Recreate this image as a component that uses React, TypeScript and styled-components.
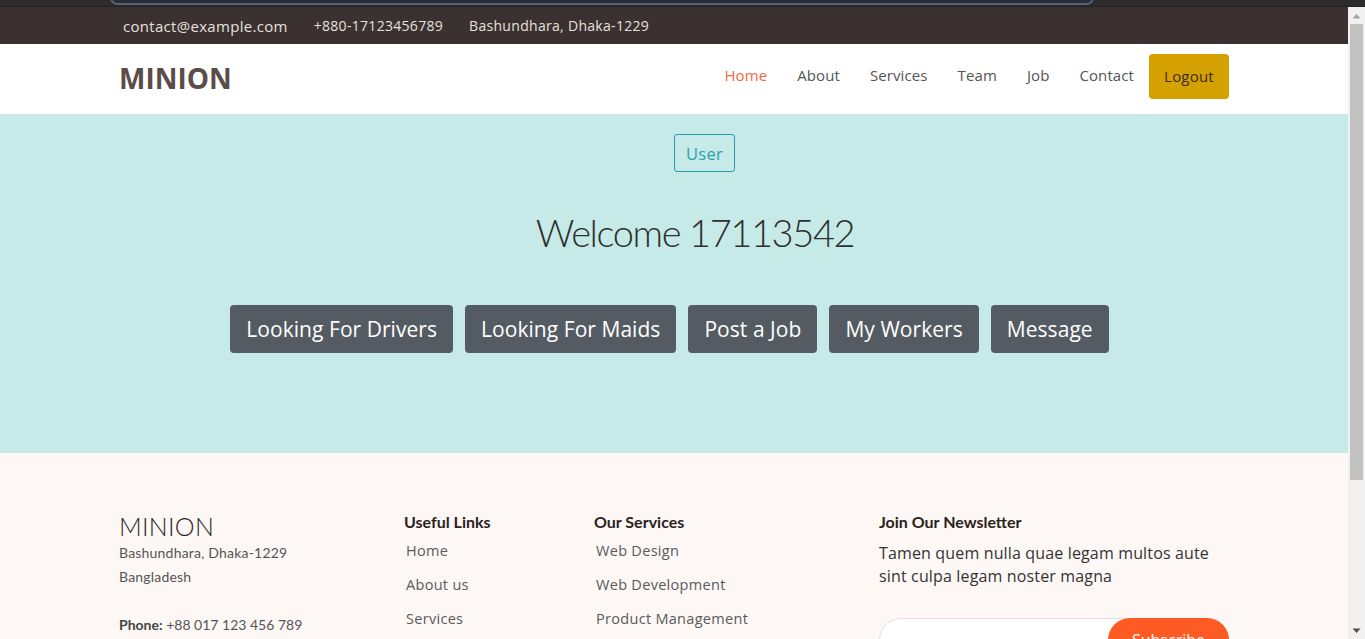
import React from "react";
import styled, { createGlobalStyle } from "styled-components";

const Global = createGlobalStyle`
  html, body { margin: 0; padding: 0; height: 100%; overflow: hidden; }
  body { font-family: "Open Sans", "DejaVu Sans", sans-serif; }
  * { box-sizing: border-box; }
`;

const Frame = styled.div`
  height: 100vh;
  display: flex;
  flex-direction: column;
  background: #2c2a2a;
`;

const ChromeStrip = styled.div`
  height: 7px;
  flex: none;
  background: #2d2b2b;
  border-bottom: 1px solid #222;
  overflow: hidden;
`;

const ChromePill = styled.div`
  margin: -10px 0 0 110px;
  width: 984px;
  height: 15px;
  border: 2px solid #56617a;
  border-radius: 8px;
  background: #2b2e34;
`;

const Viewport = styled.div`
  flex: 1;
  min-height: 0;
  display: flex;
`;

const Page = styled.div`
  flex: 1;
  min-width: 0;
  overflow: hidden;
  background: #fff;
`;

const ScrollBar = styled.div`
  width: 17px;
  flex: none;
  background: #f1f1f1;
  display: flex;
  flex-direction: column;
`;

const ScrollBtn = styled.div`
  height: 17px;
  flex: none;
  display: flex;
  align-items: center;
  justify-content: center;
`;

const ScrollThumb = styled.div`
  height: 456px;
  margin: 0 2px;
  background: #c1c1c1;
`;

const ScrollRest = styled.div`
  flex: 1;
`;

const TopBar = styled.div`
  height: 37px;
  background: #3b3130;
  display: flex;
  align-items: center;
  padding-left: 123px;
  gap: 26px;
  font-family: "Open Sans", sans-serif;
  color: #e6e0de;
`;

const TopItem = styled.span<{ $size: number }>`
  font-size: ${(p) => p.$size}px;
  letter-spacing: 0.3px;
`;

const NavBar = styled.header`
  height: 70px;
  background: #fff;
  display: flex;
  align-items: center;
  justify-content: space-between;
  padding: 0 119px 5px 119px;
`;

const Logo = styled.div`
  font-family: "Open Sans", sans-serif;
  font-weight: 700;
  font-size: 28px;
  letter-spacing: 0;
  color: #5b4c48;
  margin-top: 2px;
`;

const NavList = styled.nav`
  display: flex;
  align-items: center;
`;

const NavLink = styled.a<{ $active?: boolean }>`
  font-family: "Open Sans", sans-serif;
  font-size: 15px;
  letter-spacing: 0.1px;
  color: ${(p) => (p.$active ? "#f2683f" : "#555")};
  padding: 0 15px;
  margin-top: -3px;
  text-decoration: none;
`;

const LogoutBtn = styled.button`
  width: 80px;
  height: 45px;
  border: none;
  border-radius: 4px;
  background: #d5a100;
  color: #3e2a1c;
  font-family: "Open Sans", sans-serif;
  font-size: 15px;
  letter-spacing: 0.2px;
  padding: 0 0 2px;
`;

const Hero = styled.section`
  height: 339px;
  background: #c6eae7;
  display: flex;
  flex-direction: column;
  align-items: center;
  padding-top: 20px;
`;

const RoleBadge = styled.div`
  height: 38px;
  padding: 0 11px;
  margin-left: 61px;
  display: flex;
  align-items: center;
  border: 1px solid #23a0a6;
  border-radius: 3px;
  color: #2aa0ad;
  font-family: "Open Sans", sans-serif;
  font-size: 16.5px;
  letter-spacing: 0.3px;
`;

const Welcome = styled.h1`
  margin: 35px 0 0 42px;
  font-family: "Lato", sans-serif;
  font-weight: 300;
  font-size: 38px;
  letter-spacing: -1.4px;
  line-height: 50px;
  color: #2f2f2f;
`;

const ActionRow = styled.div`
  display: flex;
  gap: 12px;
  margin: 48px 9px 0 0;
`;

const ActionBtn = styled.button`
  height: 48px;
  padding: 0 16px;
  border: none;
  border-radius: 4px;
  background: #545b62;
  color: #fff;
  font-family: "Open Sans", sans-serif;
  font-size: 21px;
  letter-spacing: 0.05px;
`;

const Footer = styled.footer`
  background: #fdf8f5;
  height: 383px;
  display: flex;
  flex-direction: column;
`;

const FooterGrid = styled.div`
  width: 1140px;
  margin: 0 0 0 104px;
  padding-top: 58px;
  display: grid;
  grid-template-columns: 285px 190px 285px 380px;
`;

const FCol = styled.div`
  padding: 0 15px;
`;

const BrandName = styled.div`
  font-family: "Lato", sans-serif;
  font-weight: 300;
  font-size: 25px;
  line-height: 30px;
  color: #2a2a2a;
  letter-spacing: 0.3px;
`;

const Address = styled.p`
  margin: 0 0 24px;
  font-family: "Lato", sans-serif;
  font-size: 14px;
  letter-spacing: 0.2px;
  line-height: 24px;
  color: #555;
`;

const ContactLine = styled.div`
  font-family: "Lato", sans-serif;
  font-size: 14px;
  line-height: 24px;
  color: #555;
  b { color: #444; font-weight: 700; }
`;

const ColTitle = styled.h4<{ $gap?: number }>`
  margin: 0 0 ${(p) => p.$gap ?? 6}px;
  padding-top: 1px;
  font-family: "Lato", sans-serif;
  font-weight: 700;
  font-size: 16px;
  line-height: 20px;
  color: #2b2220;
`;

const LinkList = styled.ul`
  list-style: none;
  margin: 0;
  padding: 0 0 0 2px;
`;

const LinkItem = styled.li`
  font-family: "Open Sans", sans-serif;
  font-size: 14.5px;
  letter-spacing: 0.3px;
  line-height: 20px;
  color: #5a5a5a;
  padding: 3px 0 11px;
`;

const NewsText = styled.p`
  margin: 0;
  font-family: "Open Sans", sans-serif;
  font-size: 16px;
  letter-spacing: 0.15px;
  line-height: 23px;
  color: #333;
`;

const SubscribeForm = styled.form`
  margin-top: 30px;
  height: 44px;
  border: 1px solid #eadfda;
  border-radius: 22px;
  background: #fff;
  display: flex;
  justify-content: flex-end;
`;

const SubscribeBtn = styled.button`
  width: 121px;
  height: 44px;
  margin: -1px -1px 0 0;
  border: none;
  border-radius: 22px;
  background: #fd5a24;
  color: #fff;
  font-family: "Open Sans", sans-serif;
  font-size: 16px;
`;

const Copyright = styled.div`
  margin-top: auto;
  border-top: 1px solid #f0e6e2;
  padding: 24px 0;
  text-align: center;
  font-family: "Open Sans", sans-serif;
  font-size: 14px;
  color: #555;
`;

const Arrow = ({ up }: { up?: boolean }) => (
  <svg width="9" height="6" viewBox="0 0 9 6">
    {up ? (
      <path d="M0.5 5.5 L4.5 1 L8.5 5.5 Z" fill="#a3a3a3" />
    ) : (
      <path d="M0.5 0.5 L4.5 5 L8.5 0.5 Z" fill="#505050" />
    )}
  </svg>
);

export default function App() {
  return (
    <>
      <Global />
      <Frame>
        <ChromeStrip>
          <ChromePill />
        </ChromeStrip>
        <Viewport>
          <Page>
            <TopBar>
              <TopItem $size={15}>contact@example.com</TopItem>
              <TopItem $size={14}>+880-17123456789</TopItem>
              <TopItem $size={14}>Bashundhara, Dhaka-1229</TopItem>
            </TopBar>
            <NavBar>
              <Logo>MINION</Logo>
              <NavList>
                <NavLink $active>Home</NavLink>
                <NavLink>About</NavLink>
                <NavLink>Services</NavLink>
                <NavLink>Team</NavLink>
                <NavLink>Job</NavLink>
                <NavLink>Contact</NavLink>
                <LogoutBtn>Logout</LogoutBtn>
              </NavList>
            </NavBar>
            <Hero>
              <RoleBadge>User</RoleBadge>
              <Welcome>Welcome 17113542</Welcome>
              <ActionRow>
                <ActionBtn>Looking For Drivers</ActionBtn>
                <ActionBtn>Looking For Maids</ActionBtn>
                <ActionBtn>Post a Job</ActionBtn>
                <ActionBtn>My Workers</ActionBtn>
                <ActionBtn>Message</ActionBtn>
              </ActionRow>
            </Hero>
            <Footer>
              <FooterGrid>
                <FCol>
                  <BrandName>MINION</BrandName>
                  <Address>
                    Bashundhara, Dhaka-1229
                    <br />
                    Bangladesh
                  </Address>
                  <ContactLine>
                    <b>Phone:</b> +88 017 123 456 789
                  </ContactLine>
                  <ContactLine>
                    <b>Email:</b> contact@example.com
                  </ContactLine>
                </FCol>
                <FCol>
                  <ColTitle>Useful Links</ColTitle>
                  <LinkList>
                    <LinkItem>Home</LinkItem>
                    <LinkItem>About us</LinkItem>
                    <LinkItem>Services</LinkItem>
                    <LinkItem>Terms of service</LinkItem>
                    <LinkItem>Privacy policy</LinkItem>
                  </LinkList>
                </FCol>
                <FCol>
                  <ColTitle>Our Services</ColTitle>
                  <LinkList>
                    <LinkItem>Web Design</LinkItem>
                    <LinkItem>Web Development</LinkItem>
                    <LinkItem>Product Management</LinkItem>
                    <LinkItem>Marketing</LinkItem>
                    <LinkItem>Graphic Design</LinkItem>
                  </LinkList>
                </FCol>
                <FCol>
                  <ColTitle $gap={10}>Join Our Newsletter</ColTitle>
                  <NewsText>
                    Tamen quem nulla quae legam multos aute
                    <br />
                    sint culpa legam noster magna
                  </NewsText>
                  <SubscribeForm onSubmit={(e) => e.preventDefault()}>
                    <SubscribeBtn type="submit">Subscribe</SubscribeBtn>
                  </SubscribeForm>
                </FCol>
              </FooterGrid>
              <Copyright>© Copyright MINION. All Rights Reserved</Copyright>
            </Footer>
          </Page>
          <ScrollBar>
            <ScrollBtn>
              <Arrow up />
            </ScrollBtn>
            <ScrollThumb />
            <ScrollRest />
            <ScrollBtn>
              <Arrow />
            </ScrollBtn>
          </ScrollBar>
        </Viewport>
      </Frame>
    </>
  );
}
